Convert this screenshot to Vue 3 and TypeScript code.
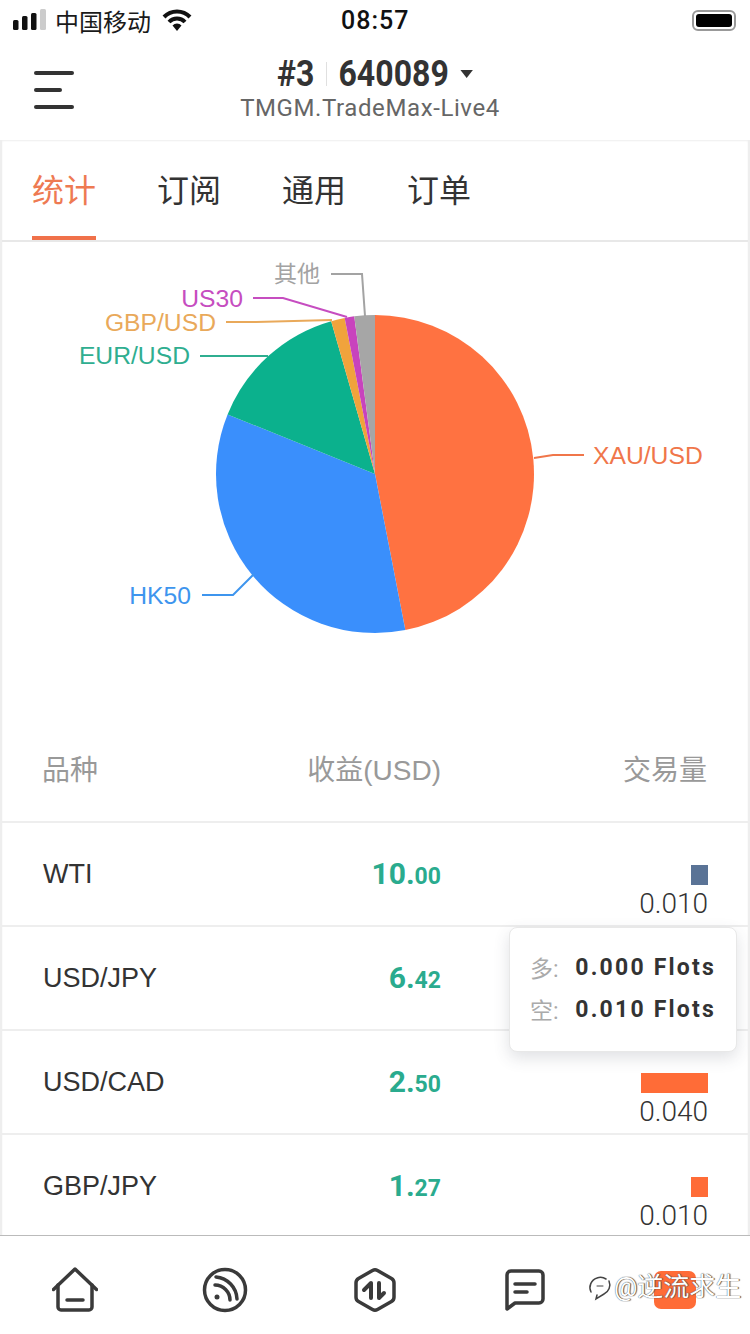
<template>
  <div class="phone">
    <div class="status-bar">
      <div class="status-left">
        <svg class="signal" width="33" height="22" viewBox="0 0 33 22">
          <rect x="0" y="11" width="5.500" height="10" rx="1.500" fill="#111" />
          <rect x="9" y="7" width="5.500" height="14" rx="1.500" fill="#111" />
          <rect x="18" y="4" width="5.500" height="17" rx="1.500" fill="#111" />
          <rect x="27" y="0" width="6" height="21" rx="1.500" fill="#ccc" />
        </svg>
        <span class="carrier">中国移动</span>
        <svg class="wifi" width="30" height="22" viewBox="0 0 30 22">
          <path d="M2 8a18 18 0 0 1 26 0M7 13a11 11 0 0 1 16 0" fill="none" stroke="#111" stroke-width="4" />
          <path d="M10.500 16.500a6 6 0 0 1 9 0L15 22z" fill="#111" />
        </svg>
      </div>
      <span class="clock">08:57</span>
      <div class="battery"><div class="battery-fill"></div></div>
    </div>

    <header class="top-bar">
      <div class="menu-btn"><i></i><i class="short"></i><i></i></div>
      <div class="account">
        <div class="account-line">
          <span>#3</span><b class="sep"></b><span>640089</span><em class="caret"></em>
        </div>
        <div class="server">TMGM.TradeMax-Live4</div>
      </div>
    </header>

    <main class="panel">
      <nav class="tabs">
        <span v-for="(t, i) in tabs" :key="t" class="tab" :class="{ active: i === 0 }">{{ t }}</span>
      </nav>

      <svg class="chart" width="746" height="477" viewBox="2 242 746 477">
        <path
          v-for="s in slices"
          :key="s.name"
          :d="s.path"
          :fill="s.color"
        />
        <g v-for="s in slices" :key="s.name + '-l'">
          <polyline :points="s.line" fill="none" :stroke="s.labelColor" stroke-width="2" />
          <text :x="s.lx" :y="s.ly" :fill="s.labelColor" :text-anchor="s.anchor" class="pie-label" :class="{ cjk: s.name === '其他' }">{{ s.name }}</text>
        </g>
      </svg>

      <div class="table">
        <div class="row head">
          <span>品种</span>
          <span class="num">收益(USD)</span>
          <span class="num">交易量</span>
        </div>
        <div v-for="r in rows" :key="r.name" class="row">
          <span class="name">{{ r.name }}</span>
          <span class="num profit">{{ r.whole }}.<small>{{ r.frac }}</small></span>
          <div v-if="r.volume" class="volume">
            <div class="bar" :style="{ width: r.barWidth + 'px', background: r.barColor }"></div>
            <span>{{ r.volume }}</span>
          </div>
        </div>

        <div class="tooltip">
          <div class="tip-line"><span>多:</span><b>0.000 Flots</b></div>
          <div class="tip-line"><span>空:</span><b>0.010 Flots</b></div>
        </div>
      </div>
    </main>

    <footer class="bottom-nav">
      <div class="nav-item">
        <svg width="46" height="46" viewBox="0 0 46 46" fill="none" stroke="#3a3a3a" stroke-width="3.500" stroke-linecap="round" stroke-linejoin="round">
          <path d="M1.500 22.500 23 2 44.500 22.500" />
          <path d="M6 18v22a3 3 0 0 0 3 3h28a3 3 0 0 0 3-3V18" />
          <path d="M15 33h16" />
        </svg>
      </div>
      <div class="nav-item">
        <svg width="46" height="46" viewBox="0 0 46 46" fill="none" stroke="#3a3a3a" stroke-width="3.500" stroke-linecap="round">
          <circle cx="23" cy="23" r="20.500" />
          <path d="M13 18a15 15 0 0 1 15 15" />
          <path d="M14 10a23 23 0 0 1 21 22" />
          <circle cx="15" cy="30" r="2.500" fill="#3a3a3a" stroke="none" />
        </svg>
      </div>
      <div class="nav-item">
        <svg width="44" height="46" viewBox="0 0 44 46" fill="none" stroke="#3a3a3a" stroke-linecap="round" stroke-linejoin="round">
          <path stroke-width="3.500" d="M19.500 3.500a5 5 0 0 1 5 0l14 8a5 5 0 0 1 2.500 4.300v14.400a5 5 0 0 1-2.500 4.300l-14 8a5 5 0 0 1-5 0l-14-8A5 5 0 0 1 3 30.200V15.800a5 5 0 0 1 2.500-4.300z" />
          <path stroke-width="4" d="M11 23l7-7v15" />
          <path stroke-width="4" d="M26 16v15l5-5" />
        </svg>
      </div>
      <div class="nav-item">
        <svg width="40" height="42" viewBox="0 0 40 42" fill="none" stroke="#3a3a3a" stroke-width="3.500" stroke-linecap="round" stroke-linejoin="round">
          <path d="M2 6a4 4 0 0 1 4-4h28a4 4 0 0 1 4 4v24a4 4 0 0 1-4 4H10l-8 6z" />
          <path d="M10 15h20M10 23h12" />
        </svg>
      </div>
      <div class="nav-item">
        <div class="me-icon"></div>
      </div>
      <div class="watermark">
        <svg width="24" height="28" viewBox="0 0 24 28" fill="none" stroke="#444" stroke-width="1.500" stroke-linecap="round">
          <path d="M3 19A10 10 0 0 1 9 5a10 10 0 0 1 9 1" />
          <path d="M21 8a10 10 0 0 1-5 13l-8 5 1-4" />
          <path d="M9 13l6 0" stroke-width="1" />
        </svg>
        <span>@逆流求生</span>
      </div>
    </footer>
  </div>
</template>

<script setup lang="ts">
interface Slice {
  name: string
  from: number
  to: number
  color: string
  labelColor: string
  line: string
  lx: number
  ly: number
  anchor: string
}

const tabs = ['统计', '订阅', '通用', '订单']

const cx = 375
const cy = 474
const radius = 159

const point = (deg: number) => {
  const a = (deg * Math.PI) / 180
  return `${cx + radius * Math.sin(a)} ${cy - radius * Math.cos(a)}`
}

const raw: Slice[] = [
  { name: 'XAU/USD', from: 0, to: 169, color: '#ff7241', labelColor: '#f0764a', line: '534,458 553,455 584,455', lx: 593, ly: 464, anchor: 'start' },
  { name: 'HK50', from: 169, to: 292, color: '#3a8ffc', labelColor: '#3e95ee', line: '254,574 233,595 202,595', lx: 191, ly: 604, anchor: 'end' },
  { name: 'EUR/USD', from: 292, to: 344, color: '#0bb18d', labelColor: '#2fae90', line: '268,356 200,356', lx: 190, ly: 364, anchor: 'end' },
  { name: 'GBP/USD', from: 344, to: 349, color: '#f0a33c', labelColor: '#e9a95a', line: '332,320 256,322 226,322', lx: 216, ly: 331, anchor: 'end' },
  { name: 'US30', from: 349, to: 352.5, color: '#c843bd', labelColor: '#c64dc0', line: '347,317 283,298 253,298', lx: 243, ly: 307, anchor: 'end' },
  { name: '其他', from: 352.5, to: 360, color: '#a6a6a6', labelColor: '#a3a3a3', line: '365,316 362,274 331,274', lx: 320, ly: 282, anchor: 'end' },
]

const slices = raw.map((s) => ({
  ...s,
  path: `M${cx} ${cy}L${point(s.from)}A${radius} ${radius} 0 ${s.to - s.from > 180 ? 1 : 0} 1 ${point(s.to)}Z`,
}))

// USD/JPY's volume sits behind the tooltip, so it has nothing to show
const rows = [
  { name: 'WTI', whole: '10', frac: '00', volume: '0.010', barWidth: 17, barColor: '#5a7396' },
  { name: 'USD/JPY', whole: '6', frac: '42', volume: '', barWidth: 0, barColor: '' },
  { name: 'USD/CAD', whole: '2', frac: '50', volume: '0.040', barWidth: 67, barColor: '#ff6c37' },
  { name: 'GBP/JPY', whole: '1', frac: '27', volume: '0.010', barWidth: 17, barColor: '#ff6c37' },
]
</script>

<style>
html,
body {
  margin: 0;
  background: #fff;
}
</style>

<style scoped>
.phone {
  position: relative;
  width: 750px;
  height: 1334px;
  display: flex;
  flex-direction: column;
  overflow: hidden;
  background: #fff;
  font-family: Roboto, "Noto Sans CJK SC", sans-serif;
  color: #333;
}

.status-bar {
  height: 40px;
  display: flex;
  align-items: center;
  justify-content: space-between;
  padding: 0 14px 0 13px;
  position: relative;
  flex: none;
}

.status-left {
  display: flex;
  align-items: center;
  gap: 9px;
}

.carrier {
  font-size: 24px;
  color: #1a1a1a;
}

.wifi {
  margin-left: 2px;
}

.clock {
  position: absolute;
  left: 341px;
  font-size: 25px;
  font-weight: 500;
  letter-spacing: 1px;
  color: #111;
}

.battery {
  width: 44px;
  height: 21px;
  border: 2px solid #999;
  border-radius: 6px;
  padding: 2px;
  box-sizing: border-box;
}

.battery-fill {
  height: 100%;
  background: #000;
  border-radius: 3px;
}

.top-bar {
  height: 100px;
  flex: none;
  display: flex;
  position: relative;
  justify-content: center;
  padding-top: 14px;
  box-sizing: border-box;
}

.menu-btn {
  position: absolute;
  left: 34px;
  top: 31px;
  width: 40px;
  display: flex;
  flex-direction: column;
  gap: 13px;
}

.menu-btn i {
  height: 4px;
  border-radius: 2px;
  background: #333;
}

.menu-btn .short {
  width: 28px;
}

.account {
  display: flex;
  flex-direction: column;
  align-items: center;
}

/* the original digits are narrow and tall, so squeeze a larger size */
.account-line {
  display: flex;
  align-items: center;
  justify-content: center;
  font-size: 36px;
  font-weight: 700;
  line-height: 40px;
  color: #333;
  transform: scaleX(0.89);
}

.sep {
  width: 1px;
  height: 24px;
  margin: 0 13px;
  background: #ddd;
}

.caret {
  width: 0;
  height: 0;
  margin-left: 13px;
  border-left: 7px solid transparent;
  border-right: 7px solid transparent;
  border-top: 8px solid #333;
}

.server {
  margin-right: 10px;
  font-size: 24px;
  line-height: 28px;
  color: #666;
  letter-spacing: 0.6px;
}

.panel {
  flex: 1;
  min-height: 0;
  overflow: hidden;
  border-left: 2px solid #eee;
  border-right: 2px solid #eee;
  box-shadow: inset 0 1px 2px #eee;
}

.tabs {
  height: 102px;
  box-sizing: border-box;
  display: flex;
  gap: 61px;
  padding-left: 30px;
  border-bottom: 2px solid #e8e8e8;
}

.tab {
  height: 100px;
  box-sizing: border-box;
  padding-top: 28px;
  font-size: 32px;
  line-height: 46px;
  color: #333;
}

.tab.active {
  color: #ee7a52;
  border-bottom: 4px solid #f0714a;
}

.chart {
  display: block;
}

.pie-label {
  font-family: "Liberation Sans", "Noto Sans CJK SC", sans-serif;
  font-size: 24.700px;
}

.pie-label.cjk {
  font-size: 23px;
}

.table {
  position: relative;
}

.row {
  display: grid;
  grid-template-columns: 200px 198px 1fr;
  align-items: center;
  height: 104px;
  box-sizing: border-box;
  padding: 0 40px 0 41px;
  border-top: 2px solid #eee;
  font-family: "Liberation Sans", "Noto Sans CJK SC", sans-serif;
  font-size: 27px;
}

.row.head {
  grid-template-columns: 201px 198px 1fr;
  height: 102px;
  border-top: 0;
  color: #999;
  font-size: 28px;
  padding: 0 41px 5px 40px;
}

.num {
  text-align: right;
}

.name {
  color: #333;
}

.profit {
  font-family: Roboto, sans-serif;
  font-size: 30px;
  font-weight: 700;
  color: #2aab8e;
  padding-bottom: 1px;
}

.profit small {
  font-size: 23px;
}

.volume {
  display: flex;
  flex-direction: column;
  align-items: flex-end;
  padding-top: 38px;
  font-family: Roboto, sans-serif;
  font-size: 28px;
  font-weight: 300;
  line-height: 36px;
  color: #333;
}

.bar {
  height: 20px;
  margin-bottom: 1px;
}

.tooltip {
  position: absolute;
  left: 507px;
  top: 208px;
  width: 228px;
  height: 125px;
  box-sizing: border-box;
  padding: 18px 20px 0 20px;
  background: #fff;
  border: 1px solid #e8e8e8;
  border-radius: 8px;
  box-shadow: 0 6px 16px rgba(60, 70, 90, 0.16);
}

.tip-line {
  display: flex;
  align-items: center;
  height: 42px;
  font-family: Roboto, "Noto Sans CJK SC", sans-serif;
  font-size: 23px;
  color: #aaa;
}

.tip-line span {
  width: 46px;
}

.tip-line b {
  color: #333;
  letter-spacing: 2.200px;
  white-space: nowrap;
}

.bottom-nav {
  position: relative;
  height: 99px;
  flex: none;
  display: grid;
  grid-template-columns: repeat(5, 1fr);
  border-top: 1px solid #bbb;
  box-sizing: border-box;
}

.nav-item {
  display: flex;
  align-items: center;
  justify-content: center;
  padding-top: 9px;
}

.me-icon {
  width: 42px;
  height: 38px;
  border-radius: 7px;
  background: #ff6c37;
}

.watermark {
  position: absolute;
  left: 588px;
  top: 36px;
  display: flex;
  align-items: center;
  gap: 2px;
  font-size: 26px;
  line-height: 30px;
  color: #fff;
  text-shadow: 0 0 1px #333, 1px 0 1px #555;
}
</style>
